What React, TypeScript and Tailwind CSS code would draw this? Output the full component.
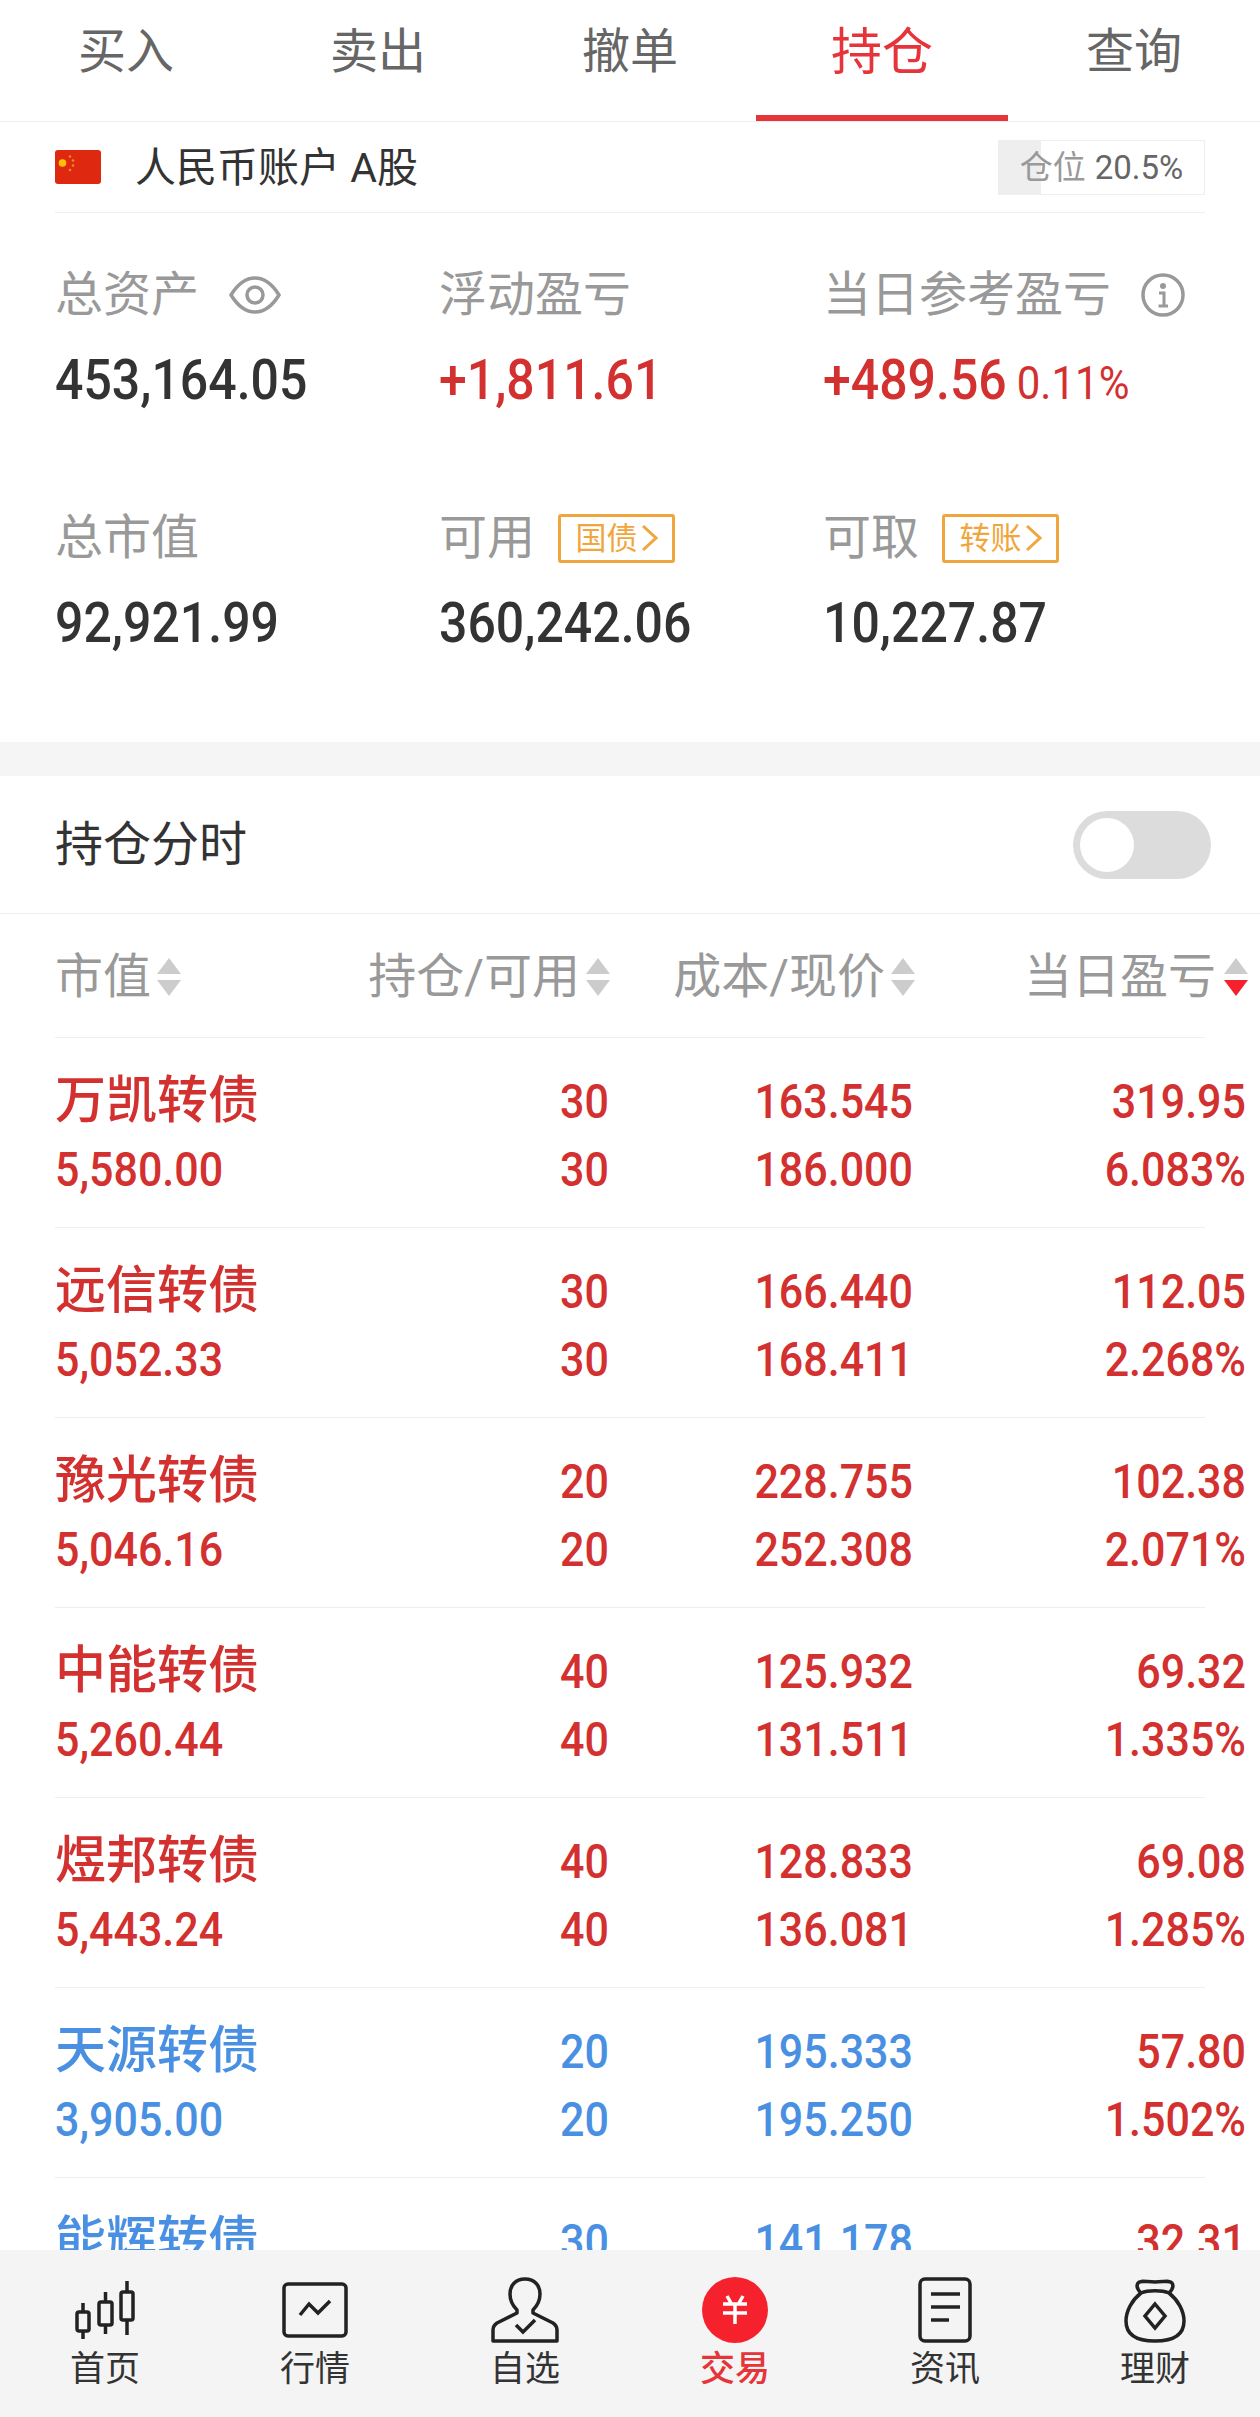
import type { ReactNode } from "react";

const tabs = ["买入", "卖出", "撤单", "持仓", "查询"];

type Row = {
  name: string;
  value: string;
  qty: string;
  cost: string;
  price: string;
  pnl: string;
  pct: string;
  blue?: boolean;
};

const rows: Row[] = [
  { name: "万凯转债", value: "5,580.00", qty: "30", cost: "163.545", price: "186.000", pnl: "319.95", pct: "6.083%" },
  { name: "远信转债", value: "5,052.33", qty: "30", cost: "166.440", price: "168.411", pnl: "112.05", pct: "2.268%" },
  { name: "豫光转债", value: "5,046.16", qty: "20", cost: "228.755", price: "252.308", pnl: "102.38", pct: "2.071%" },
  { name: "中能转债", value: "5,260.44", qty: "40", cost: "125.932", price: "131.511", pnl: "69.32", pct: "1.335%" },
  { name: "煜邦转债", value: "5,443.24", qty: "40", cost: "128.833", price: "136.081", pnl: "69.08", pct: "1.285%" },
  { name: "天源转债", value: "3,905.00", qty: "20", cost: "195.333", price: "195.250", pnl: "57.80", pct: "1.502%", blue: true },
  { name: "能辉转债", value: "", qty: "30", cost: "141.178", price: "", pnl: "32.31", pct: "", blue: true },
];

function SortArrows({ active }: { active?: boolean }) {
  return (
    <svg width="24" height="38" viewBox="0 0 24 38" className="shrink-0">
      <path d="M12 0 L24 16 L0 16 Z" fill="#cccccc" />
      <path d="M0 22 L24 22 L12 38 Z" fill={active ? "#f5222d" : "#cccccc"} />
    </svg>
  );
}

function Tag({ label }: { label: string }) {
  return (
    <span className="ml-[23px] flex h-[49px] w-[117px] items-center justify-center gap-[3px] rounded-[3px] border-[3px] border-[#f0a63c] text-[31px] leading-none text-[#f0a63c]">
      {label}
      <svg width="17" height="28" viewBox="0 0 17 28" fill="none" stroke="#f0a63c" strokeWidth="3">
        <path d="M2 2 L15 14 L2 26" />
      </svg>
    </span>
  );
}

function Stat({ label, extra, children }: { label: string; extra?: ReactNode; children: ReactNode }) {
  return (
    <div>
      <div className="flex h-[56px] items-center text-[48px] leading-none text-[#999999]">
        {label}
        {extra}
      </div>
      <div className="mt-[27px] flex h-[60px] origin-center scale-y-110 items-center text-[50px] font-medium leading-none text-[#333333]">{children}</div>
    </div>
  );
}

function NavItem({ label, active, children }: { label: string; active?: boolean; children: ReactNode }) {
  return (
    <div className="flex flex-col items-center">
      <div className="flex h-[70px] items-center justify-center">{children}</div>
      <span className={active ? "mt-[5px] text-[35px] font-medium leading-[40px] text-[#e5353a]" : "mt-[5px] text-[35px] leading-[40px] text-[#333333]"}>{label}</span>
    </div>
  );
}

export default function App() {
  return (
    <div className="flex h-[2417px] w-[1260px] flex-col overflow-hidden bg-white font-['Roboto','Noto_Sans_CJK_SC',sans-serif]">
      {/* Tabs */}
      <div className="grid h-[122px] shrink-0 grid-cols-5 border-b border-[#eeeeee]">
        {tabs.map((t, i) => (
          <div
            key={t}
            className={
              i === 3
                ? "flex items-center justify-center border-b-[6px] border-[#e5353a] pb-[10px] text-[51px] leading-none text-[#e5353a]"
                : "flex items-center justify-center pb-[18px] text-[48px] leading-none text-[#666666]"
            }
          >
            {t}
          </div>
        ))}
      </div>

      <div className="min-h-0 flex-1 overflow-hidden">
        {/* Account */}
        <div className="mx-[55px] flex h-[91px] items-center justify-between border-b border-[#eeeeee]">
          <div className="flex items-center">
            <svg width="46" height="34" viewBox="0 0 46 34" className="rounded-[3px]">
              <rect width="46" height="34" fill="#de2910" />
              <circle cx="7.5" cy="13" r="3.8" fill="#ffc107" />
              <circle cx="15" cy="6.5" r="1.3" fill="#f08a24" />
              <circle cx="18" cy="10.5" r="1.3" fill="#f08a24" />
              <circle cx="18" cy="15.5" r="1.3" fill="#f08a24" />
              <circle cx="15" cy="20" r="1.3" fill="#f08a24" />
            </svg>
            <span className="ml-[34px] pt-[2px] text-[41px] leading-none text-[#333333]">人民币账户 A股</span>
          </div>
          <div className="relative flex h-[55px] w-[207px] items-center justify-center overflow-hidden border border-[#eeeeee] text-[33px] leading-none">
            <div className="absolute inset-y-0 left-0 w-[42px] bg-[#eeeeee]" />
            <span className="relative text-[#999999]">仓位</span>
            <span className="relative ml-[9px] text-[#666666]">20.5%</span>
          </div>
        </div>

        {/* Assets */}
        <div className="grid grid-cols-[384px_384px_1fr] gap-y-[100px] pb-[89px] pl-[55px] pt-[54px]">
          <Stat
            label="总资产"
            extra={
              <svg width="52" height="38" viewBox="0 0 52 38" fill="none" stroke="#999999" strokeWidth="3.5" className="ml-[30px]">
                <path d="M2 19 C10 6 18 2 26 2 C34 2 42 6 50 19 C42 32 34 36 26 36 C18 36 10 32 2 19 Z" />
                <circle cx="26" cy="19" r="8" />
              </svg>
            }
          >
            453,164.05
          </Stat>
          <Stat label="浮动盈亏">
            <span className="text-[#d33030]">+1,811.61</span>
          </Stat>
          <Stat
            label="当日参考盈亏"
            extra={
              <svg width="44" height="44" viewBox="0 0 44 44" fill="none" stroke="#999999" strokeWidth="3.5" className="ml-[30px]">
                <circle cx="22" cy="22" r="20" />
                <circle cx="22" cy="13" r="3" fill="#999999" stroke="none" />
                <path d="M18 20 H23 V33 M17.5 33 H27" strokeWidth="3" />
              </svg>
            }
          >
            <span className="text-[#d33030]">+489.56</span>
            <span className="ml-[10px] pt-[6px] text-[42px] font-normal text-[#d33030]">0.11%</span>
          </Stat>
          <Stat label="总市值">92,921.99</Stat>
          <Stat label="可用" extra={<Tag label="国债" />}>
            360,242.06
          </Stat>
          <Stat label="可取" extra={<Tag label="转账" />}>
            10,227.87
          </Stat>
        </div>

        <div className="h-[34px] bg-[#f5f5f5]" />

        {/* Toggle row */}
        <div className="flex h-[138px] items-center justify-between border-b border-[#eeeeee] pl-[55px] pr-[49px]">
          <span className="text-[48px] leading-none text-[#333333]">持仓分时</span>
          <div className="flex h-[68px] w-[138px] items-center rounded-full bg-[#dcdcdc] pl-[7px]">
            <div className="h-[54px] w-[54px] rounded-full bg-white" />
          </div>
        </div>

        {/* Table header */}
        <div className="mx-[55px] h-[124px] border-b border-[#eeeeee]">
          <div className="grid h-full w-[1193px] grid-cols-[300px_255px_305px_333px] items-center pt-[2px] text-[48px] leading-none text-[#999999]">
            <div className="flex items-center gap-[6px]">
              市值
              <SortArrows />
            </div>
            <div className="flex items-center justify-end gap-[6px]">
              持仓/可用
              <SortArrows />
            </div>
            <div className="flex items-center justify-end gap-[6px]">
              成本/现价
              <SortArrows />
            </div>
            <div className="flex items-center justify-end gap-[8px]">
              当日盈亏
              <SortArrows active />
            </div>
          </div>
        </div>

        {/* Rows */}
        {rows.map((r) => {
          const color = r.blue ? "text-[#4a90e2]" : "text-[#d33030]";
          return (
            <div key={r.name} className="mx-[55px] h-[190px] border-b border-[#eeeeee]">
              <div className="grid h-full w-[1191px] grid-cols-[300px_254px_304px_333px] content-center gap-y-[8px] pt-[4px] text-[43px] font-medium leading-[60px]">
                <div className={`text-[51px] ${color}`}>{r.name}</div>
                <div className={`scale-y-110 text-right ${color}`}>{r.qty}</div>
                <div className={`scale-y-110 text-right ${color}`}>{r.cost}</div>
                <div className="scale-y-110 text-right text-[#d33030]">{r.pnl}</div>
                <div className={`origin-left scale-y-110 ${color}`}>{r.value}</div>
                <div className={`scale-y-110 text-right ${color}`}>{r.qty}</div>
                <div className={`scale-y-110 text-right ${color}`}>{r.price}</div>
                <div className="scale-y-110 text-right text-[#d33030]">{r.pct}</div>
              </div>
            </div>
          );
        })}
      </div>

      {/* Bottom nav */}
      <div className="grid h-[167px] shrink-0 grid-cols-6 bg-[#f4f4f4] pt-[25px]">
        <NavItem label="首页">
          <svg width="60" height="58" viewBox="0 0 60 58" fill="none" stroke="#222222" strokeWidth="3.5">
            <rect x="2" y="31" width="12" height="19" rx="2" />
            <path d="M8 22 V31 M8 50 V58" />
            <rect x="24" y="21" width="13" height="23" rx="2" />
            <path d="M30.5 11 V21 M30.5 44 V53" />
            <rect x="46" y="11" width="12" height="28" rx="2" />
            <path d="M52 0 V11 M52 39 V54" />
          </svg>
        </NavItem>
        <NavItem label="行情">
          <svg width="66" height="56" viewBox="0 0 66 56" fill="none" stroke="#222222" strokeWidth="3.5">
            <rect x="2" y="2" width="62" height="52" rx="4" />
            <path d="M18 33 L27 22 L36 31 L48 19" />
          </svg>
        </NavItem>
        <NavItem label="自选">
          <svg width="68" height="66" viewBox="0 0 68 66" fill="none" stroke="#222222" strokeWidth="3.5">
            <path d="M34 2 C24 2 19 9 19 17 C19 25 23 30 26 33 V36 L6 46 C3 48 2 50 2 53 V64 H66 V53 C66 50 65 48 62 46 L42 36 V33 C45 30 49 25 49 17 C49 9 44 2 34 2 Z" strokeLinejoin="round" />
            <path d="M25 48 L32 55 L44 43" />
          </svg>
        </NavItem>
        <NavItem label="交易" active>
          <div className="flex h-[66px] w-[66px] items-center justify-center rounded-full bg-[#f5222d]">
            <svg width="28" height="30" viewBox="0 0 28 30" fill="none" stroke="#ffffff" strokeWidth="3.5">
              <path d="M6 1 L10 8 M22 1 L18 8 M2 9 H26 M2 18 H26 M14 9 V29" />
            </svg>
          </div>
        </NavItem>
        <NavItem label="资讯">
          <svg width="54" height="66" viewBox="0 0 54 66" fill="none" stroke="#222222" strokeWidth="3.5">
            <rect x="2" y="2" width="50" height="62" rx="5" />
            <path d="M13 17 H42 M13 30 H42 M13 43 H31" strokeWidth="3.5" />
          </svg>
        </NavItem>
        <NavItem label="理财">
          <svg width="62" height="66" viewBox="0 0 62 66" fill="none" stroke="#222222" strokeWidth="3.5">
            <path d="M17 16 C13 12 12 9 14 6 C16 3 22 5 31 5 C40 5 46 3 48 6 C50 9 49 12 45 16" />
            <path d="M17 16 C24 13 38 13 45 16 C54 23 60 34 60 44 C60 58 50 64 31 64 C12 64 2 58 2 44 C2 34 8 23 17 16 Z" />
            <path d="M31 27 L41 39 L31 51 L21 39 Z" />
          </svg>
        </NavItem>
      </div>
    </div>
  );
}
